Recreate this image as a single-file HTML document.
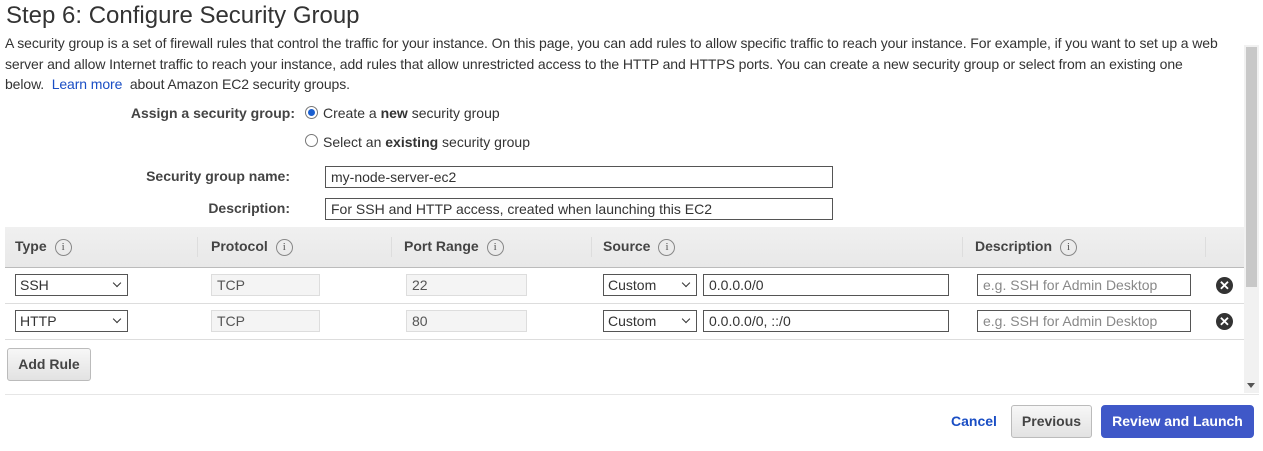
<!DOCTYPE html>
<html><head><style>
body{margin:0;width:1263px;height:451px;background:#fff;font-family:"Liberation Sans",sans-serif;font-size:14px;color:#333;position:relative;overflow:hidden}
.a{position:absolute;white-space:nowrap}
h1{position:absolute;left:6px;top:2px;margin:0;font-weight:normal;font-size:24px;color:#333}
p{position:absolute;left:5px;top:33px;width:1240px;margin:0;line-height:20.5px;font-size:14px;letter-spacing:-0.1px}
a{color:#1a4ec4;text-decoration:none}
.lbl{font-weight:bold;text-align:right;color:#444}
.inp{position:absolute;border:1px solid #555;box-sizing:border-box;height:22px;padding:2px 5px;font-size:14px;line-height:16px;background:#fff}
.ro{border:1px solid #ddd;background:#f4f4f4;color:#555}
.sel{position:absolute;height:22px;border:1px solid #555;box-sizing:border-box;padding:2px 4px;line-height:16px;background:#fff}
.sel:after{content:"";position:absolute;right:7px;top:5px;width:5px;height:5px;border-right:1.5px solid #333;border-bottom:1.5px solid #333;transform:rotate(45deg)}
.ph{color:#888}
.th{position:absolute;top:227px;height:40px;line-height:38px;font-weight:bold;color:#444}
.i{display:inline-block;width:15px;height:15px;border:1px solid #888;border-radius:50%;font-size:11px;line-height:15px;text-align:center;font-weight:normal;color:#555;margin-left:8px;vertical-align:middle;font-family:"Liberation Serif",serif}
.sep{position:absolute;top:237px;width:1px;height:20px;background:#ddd}
.x{position:absolute;width:17px;height:17px;border-radius:50%;background:#333;color:#fff;font-size:13px;line-height:17px;text-align:center;font-weight:bold}
.btn{position:absolute;box-sizing:border-box;border:1px solid #bbb;border-radius:3px;background:linear-gradient(#f7f7f7,#e2e2e2);font-weight:bold;color:#444;text-align:center}
</style></head><body>
<h1>Step 6: Configure Security Group</h1>
<p>A security group is a set of firewall rules that control the traffic for your instance. On this page, you can add rules to allow specific traffic to reach your instance. For example, if you want to set up a web<br>server and allow Internet traffic to reach your instance, add rules that allow unrestricted access to the HTTP and HTTPS ports. You can create a new security group or select from an existing one<br>below. &nbsp;<a>Learn more</a>&nbsp; about Amazon EC2 security groups.</p>
<div class="a lbl" style="right:968px;top:105px">Assign a security group:</div>
<div class="a" style="left:305px;top:106px;width:11px;height:11px;border:1px solid #777;border-radius:50%"></div>
<div class="a" style="left:308px;top:109px;width:7px;height:7px;border-radius:50%;background:#1a5fd0"></div>
<div class="a" style="left:323px;top:105px">Create a <b>new</b> security group</div>
<div class="a" style="left:305px;top:134px;width:11px;height:11px;border:1px solid #777;border-radius:50%"></div>
<div class="a" style="left:323px;top:134px">Select an <b>existing</b> security group</div>
<div class="a lbl" style="right:973px;top:168px">Security group name:</div>
<div class="inp" style="left:325px;top:166px;width:508px">my-node-server-ec2</div>
<div class="a lbl" style="right:973px;top:200px">Description:</div>
<div class="inp" style="left:325px;top:198px;width:508px">For SSH and HTTP access, created when launching this EC2</div>
<div class="a" style="left:5px;top:227px;width:1239px;height:40px;background:linear-gradient(#f0f0f0,#e8e8e8);border-bottom:1px solid #bbb"></div>
<div class="th" style="left:15px">Type<span class="i">i</span></div>
<div class="sep" style="left:197px"></div>
<div class="th" style="left:211px">Protocol<span class="i">i</span></div>
<div class="sep" style="left:391px"></div>
<div class="th" style="left:404px">Port Range<span class="i">i</span></div>
<div class="sep" style="left:591px"></div>
<div class="th" style="left:603px">Source<span class="i">i</span></div>
<div class="sep" style="left:962px"></div>
<div class="th" style="left:975px">Description<span class="i">i</span></div>
<div class="sep" style="left:1205px"></div>
<div class="a" style="left:5px;top:303px;width:1239px;height:1px;background:#ddd"></div>
<div class="a" style="left:5px;top:339px;width:1239px;height:1px;background:#ddd"></div>
<div class="sel" style="left:15px;top:274px;width:113px">SSH</div>
<div class="inp ro" style="left:211px;top:274px;width:109px">TCP</div>
<div class="inp ro" style="left:406px;top:274px;width:121px">22</div>
<div class="sel" style="left:603px;top:274px;width:94px">Custom</div>
<div class="inp" style="left:703px;top:274px;width:246px">0.0.0.0/0</div>
<div class="inp ph" style="left:977px;top:274px;width:214px">e.g. SSH for Admin Desktop</div>
<div class="x" style="left:1216px;top:277px">✕</div>
<div class="sel" style="left:15px;top:310px;width:113px">HTTP</div>
<div class="inp ro" style="left:211px;top:310px;width:109px">TCP</div>
<div class="inp ro" style="left:406px;top:310px;width:121px">80</div>
<div class="sel" style="left:603px;top:310px;width:94px">Custom</div>
<div class="inp" style="left:703px;top:310px;width:246px">0.0.0.0/0, ::/0</div>
<div class="inp ph" style="left:977px;top:310px;width:214px">e.g. SSH for Admin Desktop</div>
<div class="x" style="left:1216px;top:313px">✕</div>
<div class="btn" style="left:7px;top:348px;width:84px;height:33px;line-height:31px">Add Rule</div>
<div class="a" style="left:1244px;top:45px;width:15px;height:348px;background:#f1f1f1"></div>
<div class="a" style="left:1246px;top:47px;width:11px;height:240px;background:#c8c8c8"></div>
<div class="a" style="left:1247px;top:383px;border-left:4px solid transparent;border-right:4px solid transparent;border-top:5px solid #555"></div>
<div class="a" style="left:5px;top:394px;width:1254px;height:1px;background:#e6e6e6"></div>
<div class="a" style="left:951px;top:413px;color:#1a4ec4;font-weight:bold">Cancel</div>
<div class="btn" style="left:1011px;top:405px;width:81px;height:33px;line-height:31px">Previous</div>
<div class="btn" style="left:1101px;top:405px;width:153px;height:33px;line-height:31px;background:#3f58c8;border-color:#3f58c8;color:#fff;border-radius:4px">Review and Launch</div>
</body></html>
